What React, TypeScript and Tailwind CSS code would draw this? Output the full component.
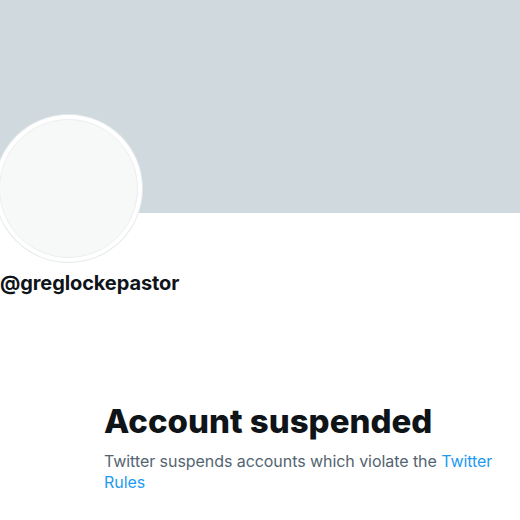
import React from "react";

export default function App() {
  return (
    <div className="w-[520px] h-[520px] overflow-hidden bg-white" style={{ fontFamily: "Inter, 'Liberation Sans', sans-serif" }}>
      <div className="h-[213px] bg-[#cfd9de]" />
      <div className="ml-[-6px] mt-[-99px] w-[149px] h-[149px] rounded-full bg-[#e6eaeb] p-[1px]">
        <div className="w-full h-full rounded-full bg-white p-[4px]">
          <div className="w-full h-full rounded-full bg-[#f7f9f9] border border-[#eceeef]" />
        </div>
      </div>
      <div className="mt-[8px] text-[20px] leading-[24px] font-bold text-[#0f1419] tracking-[-0.1px]">@greglockepastor</div>
      <div className="pl-[104px] mt-[106px]">
        <div className="text-[33px] leading-[40px] font-extrabold text-[#0f1419]">Account suspended</div>
        <div className="mt-[10px] text-[16px] leading-[21px] text-[#536471] w-[400px] tracking-[-0.06px]">
          Twitter suspends accounts which violate the <span className="text-[#1d9bf0]">Twitter Rules</span>
        </div>
      </div>
    </div>
  );
}
